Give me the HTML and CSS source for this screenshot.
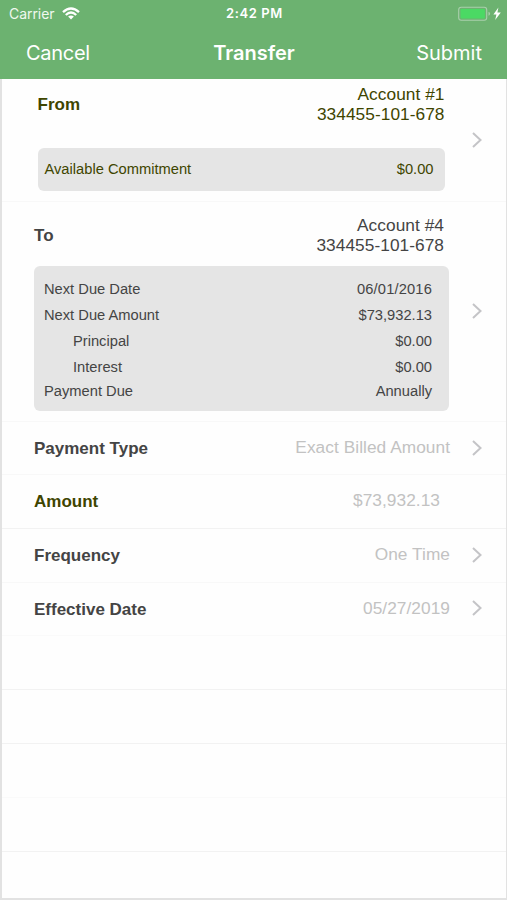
FILE: index.html
```html
<!DOCTYPE html>
<html lang="en">
<head>
<meta charset="utf-8">
<title>Transfer</title>
<link rel="stylesheet" href="styles.css">
</head>
<body>
<header class="top">
  <div class="status">
    <div class="carrier"><span>Carrier</span>
      <svg width="18" height="13" viewBox="0 0 18 13" fill="none" stroke="#fff" stroke-width="2.3"><path d="M1 5.1Q9-2.2 17 5.1M3.8 8Q9 3.1 14.2 8"/><path d="M9 12.6L6.1 9.6Q9 7.2 11.9 9.6Z" fill="#fff" stroke="none"/></svg>
    </div>
    <time class="clock">2:42 PM</time>
    <svg class="battery" width="44" height="16" viewBox="0 0 44 16"><rect x=".7" y="1.2" width="28" height="13" rx="2.5" fill="none" stroke="#a9cfac" stroke-width="1.1"/><rect x="2.5" y="3" width="24.4" height="9.4" rx="1" fill="#4bd964"/><path d="M30.5 5.8q1.6.4 1.6 2t-1.6 2z" fill="#a9cfac"/><path d="M40.4 1.6L35.4 8.6h3L37.2 14 42.8 6.6h-3.4z" fill="#fff"/></svg>
  </div>
  <nav class="bar"><span class="cancel">Cancel</span><h1>Transfer</h1><span class="submit">Submit</span></nav>
</header>
<main class="list">
  <section class="row from olive">
    <div class="body">
      <div class="head"><h2>From</h2><p>Account #1<br>334455-101-678</p></div>
      <div class="card"><div class="line"><span>Available Commitment</span><span>$0.00</span></div></div>
    </div>
    <svg class="chev" viewBox="0 0 10 16"><path d="M1 1l7.5 7L1 15"/></svg>
  </section>
  <section class="row to">
    <div class="body">
      <div class="head"><h2>To</h2><p>Account #4<br>334455-101-678</p></div>
      <div class="card">
        <div class="line"><span>Next Due Date</span><span class="date">06/01/2016</span></div>
        <div class="line"><span>Next Due Amount</span><span>$73,932.13</span></div>
        <div class="line sub"><span>Principal</span><span>$0.00</span></div>
        <div class="line sub interest"><span>Interest</span><span>$0.00</span></div>
        <div class="line last"><span>Payment Due</span><span>Annually</span></div>
      </div>
    </div>
    <svg class="chev" viewBox="0 0 10 16"><path d="M1 1l7.5 7L1 15"/></svg>
  </section>
  <section class="row item short"><h2>Payment Type</h2><span class="value">Exact Billed Amount</span><svg class="chev" viewBox="0 0 10 16"><path d="M1 1l7.5 7L1 15"/></svg></section>
  <section class="row item strong amount"><h2 class="olive">Amount</h2><span class="value">$73,932.13</span></section>
  <section class="row item"><h2>Frequency</h2><span class="value">One Time</span><svg class="chev" viewBox="0 0 10 16"><path d="M1 1l7.5 7L1 15"/></svg></section>
  <section class="row item faint"><h2>Effective Date</h2><span class="value">05/27/2019</span><svg class="chev" viewBox="0 0 10 16"><path d="M1 1l7.5 7L1 15"/></svg></section>
  <div class="row item strong"></div>
  <div class="row item strong"></div>
  <div class="row item faint"></div>
  <div class="row item strong"></div>
</main>
</body>
</html>
```
FILE: styles.css
```css
* { box-sizing: border-box; }
body { margin: 0; height: 900px; overflow: hidden; background: #fefefe; color: #444; font: 17.3px/19.5px "Liberation Sans", Arial, sans-serif; display: flex; flex-direction: column; }
h1, h2, p { margin: 0; }
svg { display: block; flex: none; }
.top { height: 79px; flex: none; background: #6cb270; color: #fff; font-family: Inter, sans-serif; }
.status { height: 27px; display: grid; grid-template-columns: 1fr auto 1fr; align-items: center; padding: 0 5px 0 9px; font-size: 14px; }
.carrier { display: flex; align-items: center; gap: 7px; color: #f0f8ef; letter-spacing: -.05px; }
.clock { font-weight: 600; font-size: 13px; letter-spacing: .9px; letter-spacing: .6px; margin: 1px 0 0 -2px; }
.battery { justify-self: end; }
.bar { height: 52px; display: grid; grid-template-columns: 1fr auto 1fr; align-items: center; padding: 0 25px 0 26px; font-size: 20px; line-height: 24px; }
.bar h1 { font-size: 20px; font-weight: 600; }
.cancel { letter-spacing: -.3px; }
.submit { text-align: right; }
.list { flex: 1; border: solid #e2e2e2; border-width: 0 1px 2px 2px; }
.row { display: flex; border-bottom: 1px solid #f8f8f8; padding-right: 24px; }
.strong { border-bottom-color: #f2f2f2; }
.faint { border-bottom-color: #fafafa; }
h2 { font-size: 17px; line-height: 20px; font-weight: 700; }
.olive { color: #3f4500; }
.chev { width: 10px; height: 16px; margin-left: auto; align-self: center; fill: none; stroke: #c4c4c7; stroke-width: 2; }
.head { display: flex; justify-content: space-between; height: 40px; text-align: right; letter-spacing: .05px; }
.card { background: #e5e5e5; border-radius: 6px; font-size: 14.7px; }
.line { display: flex; justify-content: space-between; height: 26px; line-height: 26px; }
.date { letter-spacing: .15px; }
.from { height: 123px; }
.from .body { width: 407px; margin-left: 35.5px; padding-top: 6px; }
.from h2 { padding-top: 10px; }
.from .card { height: 43px; padding: 8px 11px 0 7px; margin-top: 23px; }
.to { height: 220px; }
.to .body { width: 415px; margin-left: 32px; padding-top: 14px; }
.to .head { padding-right: 5px; }
.to h2 { padding-top: 10px; }
.to .card { height: 145px; padding: 10px 17px 0 10px; margin-top: 10px; }
.to .chev { margin-bottom: 2px; }
.sub span:first-child { padding-left: 29px; }
.interest { height: 25px; line-height: 27px; }
.last { height: 24px; line-height: 24px; }
.item { height: 53.8px; align-items: center; padding-left: 32px; }
.short { height: 53px; }
.item h2 { padding-top: 2px; }
.value { margin-left: auto; color: #c2c2c2; padding-bottom: 1px; letter-spacing: .05px; }
.item .chev { margin-left: 22px; margin-bottom: 1px; }
.amount { padding-right: 66px; }
```
